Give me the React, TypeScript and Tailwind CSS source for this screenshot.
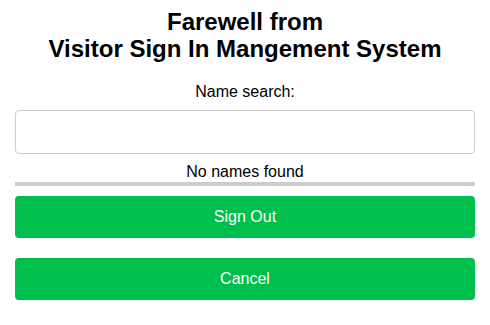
import React, { useState } from 'react';

export default function App() {
  const [query, setQuery] = useState('');

  return (
    <div className="w-[490px] h-[325px] bg-white px-[15px] font-['Liberation_Sans',Arial,sans-serif] text-black">
      <h1 className="pt-[8px] text-center text-[24px] font-bold leading-[27px]">
        Farewell from
        <br />
        Visitor Sign In Mangement System
      </h1>
      <div className="mt-[20px] text-center text-base leading-[20px]">Name search:</div>
      <input
        value={query}
        onChange={(e) => setQuery(e.target.value)}
        className="mt-[8px] block h-[44px] w-full rounded border border-[#cccccc] px-3 text-base outline-none"
      />
      <div className="mt-[8px] text-center text-base leading-[20px]">No names found</div>
      <div className="h-[4px] bg-[#cccccc]" />
      <button className="mt-[10px] block h-[42px] w-full rounded bg-[#00bf4c] text-base text-white">
        Sign Out
      </button>
      <button className="mt-[20px] block h-[42px] w-full rounded bg-[#00bf4c] text-base text-white">
        Cancel
      </button>
    </div>
  );
}
